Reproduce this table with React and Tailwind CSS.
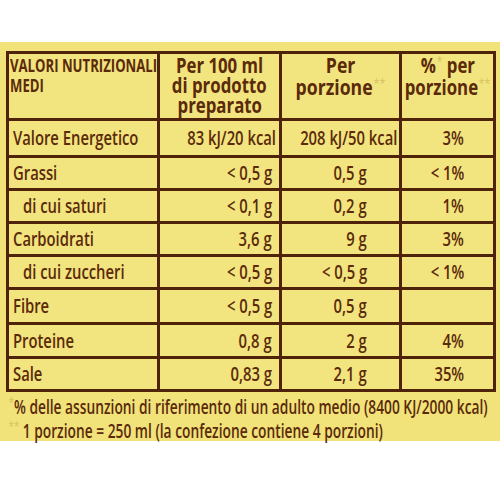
import React from 'react';

const font = { fontFamily: '"Open Sans", "Liberation Sans", sans-serif' };

const rows = [
  { label: 'Valore Energetico', a: '83 kJ/20 kcal', b: '208 kJ/50 kcal', c: '3%', wide: true },
  { label: 'Grassi', a: '< 0,5 g', b: '0,5 g', c: '< 1%' },
  { label: 'di cui saturi', a: '< 0,1 g', b: '0,2 g', c: '1%', indent: true },
  { label: 'Carboidrati', a: '3,6 g', b: '9 g', c: '3%' },
  { label: 'di cui zuccheri', a: '< 0,5 g', b: '< 0,5 g', c: '< 1%', indent: true },
  { label: 'Fibre', a: '< 0,5 g', b: '0,5 g', c: '' },
  { label: 'Proteine', a: '0,8 g', b: '2 g', c: '4%' },
  { label: 'Sale', a: '0,83 g', b: '2,1 g', c: '35%' },
];

// testo condensato: il font originale è un Frutiger condensed
const Narrow = ({ children, className = 'origin-left scale-x-[0.78]' }) => (
  <span className={`inline-block whitespace-nowrap ${className}`}>{children}</span>
);

const Star = ({ children }) => (
  <span className="text-[#d8c060] text-[13px] font-normal align-top leading-none relative top-[1px] ml-[1px]">{children}</span>
);

const App = () => {
  return (
    <div className="w-[500px] h-[500px] bg-white flex flex-col text-[#5a2a0a] overflow-hidden" style={font}>
      <div className="h-[42px]" />
      <div className="h-[399px] bg-[#f1e27a] pt-[9px] px-[6px]">
        {/* tabella */}
        <div className="w-[490px] grid grid-cols-[148px_119px_117px_91px] grid-rows-[64px_34px_30px_30px_30px_30px_32px_31px_30px] gap-[3px] p-[3px] bg-[#4e2309]">
          <div className="bg-[#f2e47f] pl-[1px] pt-[1px] font-bold text-[18px] leading-[20px] flex flex-col items-start">
            <Narrow className="origin-left scale-x-[0.73]">VALORI NUTRIZIONALI</Narrow>
            <Narrow className="origin-left scale-x-[0.73]">MEDI</Narrow>
          </div>
          <div className="bg-[#f2e47f] font-bold text-[21px] leading-[20px] pt-[1px] flex flex-col items-center">
            <Narrow className="origin-center scale-x-[0.8]">Per 100 ml</Narrow>
            <Narrow className="origin-center scale-x-[0.8]">di prodotto</Narrow>
            <Narrow className="origin-center scale-x-[0.8]">preparato</Narrow>
          </div>
          <div className="bg-[#f2e47f] font-bold text-[21px] leading-[22px] flex flex-col items-center">
            <Narrow className="origin-center scale-x-[0.84]">Per</Narrow>
            <Narrow className="origin-center scale-x-[0.84]">porzione<Star>**</Star></Narrow>
          </div>
          <div className="bg-[#f2e47f] font-bold text-[21px] leading-[22px] flex flex-col items-center">
            <Narrow className="origin-center scale-x-[0.8]">%<Star>*</Star> per</Narrow>
            <Narrow className="origin-center scale-x-[0.8]">porzione<Star>**</Star></Narrow>
          </div>
          {rows.map((r) => (
            <React.Fragment key={r.label}>
              <div className={`bg-[#f2e47f] flex items-center text-[20px] font-semibold ${r.indent ? 'pl-[14px]' : 'pl-[4px]'}`}>
                <Narrow className="origin-left scale-x-[0.74]">{r.label}</Narrow>
              </div>
              <div className={`bg-[#f2e47f] flex items-center text-[20px] font-semibold justify-end ${r.wide ? 'pr-[3px]' : 'pr-[7px]'}`}>
                <Narrow className="origin-right scale-x-[0.74]">{r.a}</Narrow>
              </div>
              <div className={`bg-[#f2e47f] flex items-center text-[20px] font-semibold justify-end ${r.wide ? 'pr-[2px]' : 'pr-[32px]'}`}>
                <Narrow className="origin-right scale-x-[0.74]">{r.b}</Narrow>
              </div>
              <div className="bg-[#f2e47f] flex items-center text-[20px] font-semibold justify-end pr-[29px]">
                <Narrow className="origin-right scale-x-[0.74]">{r.c}</Narrow>
              </div>
            </React.Fragment>
          ))}
        </div>
        {/* note */}
        <div className="mt-[3px] text-[19px] font-semibold leading-[24px] pl-[2px] flex flex-col items-start">
          <Narrow className="origin-left scale-x-[0.725]"><Star>*</Star>% delle assunzioni di riferimento di un adulto medio (8400 KJ/2000 kcal)</Narrow>
          <Narrow className="origin-left scale-x-[0.725]"><Star>**</Star> 1 porzione = 250 ml (la confezione contiene 4 porzioni)</Narrow>
        </div>
      </div>
    </div>
  );
};

export default App;
